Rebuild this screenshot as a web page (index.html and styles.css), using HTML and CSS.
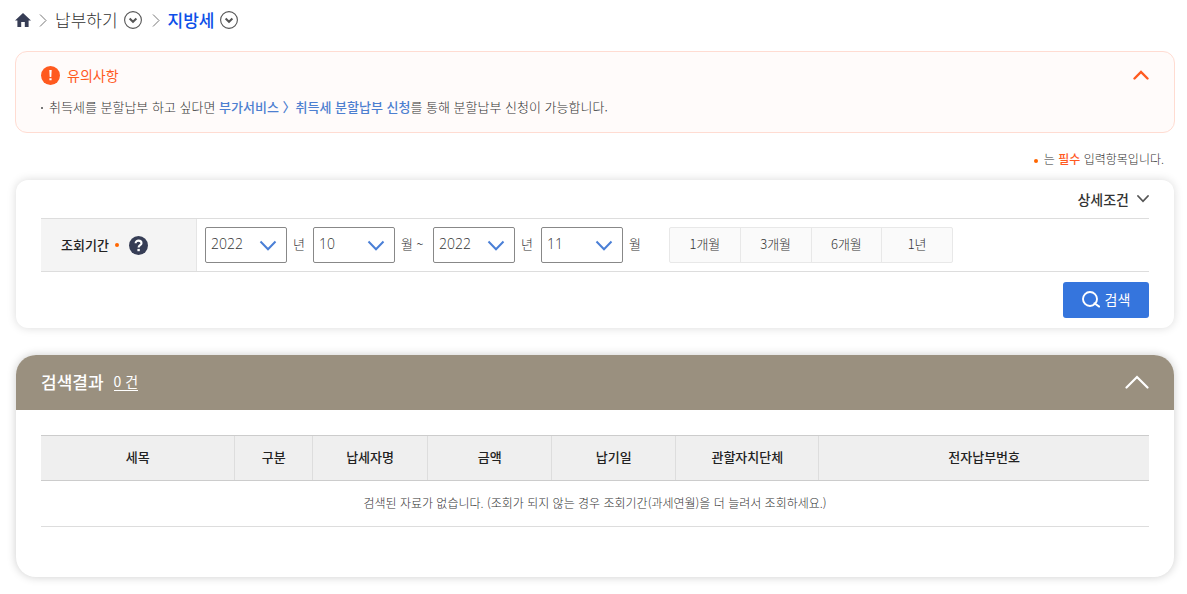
FILE: index.html
```html
<!DOCTYPE html>
<html lang="ko">

<head>
    <meta charset="UTF-8">
    <meta name="viewport" content="width=device-width, initial-scale=1.0">
    <title>지방세 납부하기</title>
    <link rel="stylesheet" href="styles.css">
</head>

<body>
    <nav class="location">
        <a href="#" class="home" aria-label="홈">
            <svg width="16" height="14" viewBox="0 0 16 14"><path d="M8 0 L16 7.5 H13.6 V14 H9.8 V9 H6.2 V14 H2.4 V7.5 H0 Z" fill="#363d55"/></svg>
        </a>
        <svg class="sep" width="8" height="13" viewBox="0 0 8 13"><path d="M1 .5 L7 6.5 L1 12.5" fill="none" stroke="#777"/></svg>
        <a href="#">납부하기</a>
        <button type="button" class="more" aria-label="납부하기 메뉴">
            <svg width="18" height="18" viewBox="0 0 18 18" fill="none"><circle cx="9" cy="9" r="8.4" stroke="#555" stroke-width="1.1"/><path d="M5.6 7.5 L9 10.8 L12.4 7.5" stroke="#555" stroke-width="2"/></svg>
        </button>
        <svg class="sep" width="8" height="13" viewBox="0 0 8 13"><path d="M1 .5 L7 6.5 L1 12.5" fill="none" stroke="#777"/></svg>
        <a href="#" class="on">지방세</a>
        <button type="button" class="more" aria-label="지방세 메뉴">
            <svg width="18" height="18" viewBox="0 0 18 18" fill="none"><circle cx="9" cy="9" r="8.4" stroke="#555" stroke-width="1.1"/><path d="M5.6 7.5 L9 10.8 L12.4 7.5" stroke="#555" stroke-width="2"/></svg>
        </button>
    </nav>

    <section class="notice">
        <div class="notice-head">
            <svg width="19" height="19" viewBox="0 0 19 19"><circle cx="9.5" cy="9.5" r="9.5" fill="#ff5a1f"/><path d="M8.3 4 H10.7 L10.3 11 H8.7 Z M8.4 12.3 H10.6 V14.3 H8.4 Z" fill="#fff"/></svg>
            <h2>유의사항</h2>
            <button type="button" class="toggle" aria-label="유의사항 접기">
                <svg width="16" height="10" viewBox="0 0 16 10"><path d="M1.5 8.5 L8 2 L14.5 8.5" fill="none" stroke="#ff5a1f" stroke-width="2.4" stroke-linecap="round"/></svg>
            </button>
        </div>
        <ul>
            <li>취득세를 분할납부 하고 싶다면 <a href="#">부가서비스 〉취득세 분할납부 신청</a>를 통해 분할납부 신청이 가능합니다.</li>
        </ul>
    </section>

    <p class="required"><i class="dot"></i>는 <em>필수</em> 입력항목입니다.</p>

    <form action="#" class="search">
        <button type="button" class="detail">상세조건
            <svg width="12" height="8" viewBox="0 0 12 8"><path d="M1 1 L6 6.3 L11 1" fill="none" stroke="#555" stroke-width="1.8" stroke-linecap="round"/></svg>
        </button>

        <div class="row">
            <div class="label">
                <span>조회기간</span><i class="dot"></i>
                <button type="button" class="help" aria-label="도움말">
                    <svg width="19" height="19" viewBox="0 0 19 19" fill="none"><circle cx="9.5" cy="9.5" r="9.5" fill="#363d55"/><path d="M6.6 7.3 C6.6 3.6 12.5 3.8 12.5 7.2 C12.5 9.3 9.6 9 9.6 11.4" stroke="#fff" stroke-width="2.1"/><path d="M8.4 12.9 H10.8 V15.2 H8.4 Z" fill="#fff"/></svg>
                </button>
            </div>
            <div class="period">
                <span class="select">
                    <select id="fromYear"><option>2022</option><option>2021</option></select>
                    <svg width="18" height="11" viewBox="0 0 18 11"><path d="M1.5 1.5 L9 9.2 L16.5 1.5" /></svg>
                </span>
                <label for="fromYear">년</label>
                <span class="select">
                    <select id="fromMonth"><option>10</option><option>11</option></select>
                    <svg width="18" height="11" viewBox="0 0 18 11"><path d="M1.5 1.5 L9 9.2 L16.5 1.5" /></svg>
                </span>
                <label for="fromMonth" class="wide">월 ~</label>
                <span class="select">
                    <select id="toYear"><option>2022</option><option>2021</option></select>
                    <svg width="18" height="11" viewBox="0 0 18 11"><path d="M1.5 1.5 L9 9.2 L16.5 1.5" /></svg>
                </span>
                <label for="toYear">년</label>
                <span class="select">
                    <select id="toMonth"><option>11</option><option>12</option></select>
                    <svg width="18" height="11" viewBox="0 0 18 11"><path d="M1.5 1.5 L9 9.2 L16.5 1.5" /></svg>
                </span>
                <label for="toMonth">월</label>
                <div class="quick">
                    <button type="button">1개월</button>
                    <button type="button">3개월</button>
                    <button type="button">6개월</button>
                    <button type="button">1년</button>
                </div>
            </div>
        </div>

        <button type="submit" class="submit">
            <svg width="18" height="17" viewBox="0 0 18 17" fill="none" stroke="#fff" stroke-width="1.9"><circle cx="8" cy="8" r="7"/><path d="M12.4 12.2 L17.2 15.6" stroke-linecap="round"/></svg>
            검색
        </button>
    </form>

    <section class="result">
        <div class="result-head">
            <h2>검색결과</h2>
            <span class="count">0 건</span>
            <button type="button" class="toggle" aria-label="검색결과 접기">
                <svg width="24" height="14" viewBox="0 0 24 14"><path d="M1.5 12.5 L12 2 L22.5 12.5" fill="none" stroke="#fff" stroke-width="2.2" stroke-linecap="round"/></svg>
            </button>
        </div>
        <div class="result-body">
            <table>
                <colgroup>
                    <col class="c1">
                    <col class="c2">
                    <col class="c3">
                    <col class="c4">
                    <col class="c4">
                    <col class="c5">
                    <col>
                </colgroup>
                <thead>
                    <tr>
                        <th>세목</th>
                        <th>구분</th>
                        <th>납세자명</th>
                        <th>금액</th>
                        <th>납기일</th>
                        <th>관할자치단체</th>
                        <th>전자납부번호</th>
                    </tr>
                </thead>
                <tbody>
                    <tr>
                        <td colspan="7">검색된 자료가 없습니다. (조회가 되지 않는 경우 조회기간(과세연월)을 더 늘려서 조회하세요.)</td>
                    </tr>
                </tbody>
            </table>
        </div>
    </section>
</body>

</html>
```
FILE: styles.css
```css
* {
    margin: 0;
    padding: 0;
    box-sizing: border-box;
}

body {
    padding: 8px 12px 16px 15px;
    background-color: #fff;
    color: #333;
    font-family: "Noto Sans CJK KR", "Noto Sans", sans-serif;
    font-size: 13px;
    font-weight: 300;
    line-height: 20px;
}

button,
select {
    font: inherit;
    color: inherit;
    border: 0;
    background: none;
    cursor: pointer;
}

a {
    color: inherit;
    text-decoration: none;
}

svg {
    display: block;
    flex: none;
}

/* location */
.location {
    display: flex;
    align-items: center;
    height: 24px;
    font-size: 17px;
}

.location .home {
    margin-right: 8px;
}

.location .sep {
    margin-right: 8px;
}

.location .more {
    margin: 0 10px 0 6px;
}

.location .on {
    color: #0c50e8;
    font-weight: 500;
}

/* notice */
.notice {
    margin-top: 19px;
    padding: 13px 25px 15px;
    border: 1px solid #ffdcd2;
    border-radius: 12px;
    background-color: #fffbfa;
}

.notice-head {
    display: flex;
    align-items: center;
    gap: 7px;
    height: 20px;
}

.notice-head h2 {
    color: #ff5a1f;
    font-size: 14px;
    font-weight: 400;
}

.toggle {
    margin-left: auto;
}

.notice ul {
    margin-top: 12px;
    list-style: none;
}

.notice li::before {
    content: "";
    display: inline-block;
    width: 2px;
    height: 2px;
    margin-right: 6px;
    background-color: #777;
    vertical-align: middle;
}

.notice li a {
    color: #4d7fd0;
    font-weight: 500;
}

.required {
    margin-top: 16px;
    padding-right: 11px;
    font-size: 12px;
    text-align: right;
}

.required em {
    color: #ff5a1f;
    font-style: normal;
    font-weight: 500;
}

.dot {
    display: inline-block;
    width: 4px;
    height: 4px;
    border-radius: 50%;
    background-color: #f60;
    vertical-align: middle;
}

.required .dot {
    margin-right: 6px;
}

/* search */
.search {
    display: flex;
    flex-direction: column;
    margin: 11px 1px 0;
    padding: 0 25px 10px;
    border-radius: 12px;
    background-color: #fff;
    box-shadow: 0 0 10px rgba(0, 0, 0, 0.15);
}

.detail {
    display: flex;
    align-items: center;
    gap: 8px;
    align-self: flex-end;
    height: 38px;
    color: #333;
    font-size: 14px;
    font-weight: 500;
}

.row {
    display: flex;
    min-height: 54px;
    border-top: 1px solid #ddd;
    border-bottom: 1px solid #ddd;
}

.label {
    display: flex;
    align-items: center;
    width: 156px;
    padding-left: 20px;
    border-right: 1px solid #e5e5e5;
    background-color: #f4f4f4;
    color: #222;
    font-weight: 500;
}

.label .dot {
    margin: 0 10px 0 6px;
}

.period {
    display: flex;
    flex-wrap: wrap;
    align-items: center;
    padding: 8px;
}

.period label {
    width: 26px;
    padding: 0 0 2px 6px;
}

.period .wide {
    width: 38px;
}

.select {
    display: grid;
    align-items: center;
    width: 82px;
}

.select select,
.select svg {
    grid-area: 1 / 1;
}

.select select {
    width: 100%;
    height: 36px;
    padding: 0 5px 2px;
    border: 1px solid #888;
    border-radius: 2px;
    appearance: none;
    font-family: "Open Sans", "Noto Sans", sans-serif;
    font-size: 14px;
}

.select svg {
    justify-self: end;
    margin-right: 10px;
    fill: none;
    stroke: #4a7fd6;
    stroke-width: 2;
    pointer-events: none;
}

.quick {
    display: flex;
    width: 284px;
    margin-left: 20px;
    border: 1px solid #e8e8e8;
    border-radius: 2px;
    background-color: #fafafa;
}

.quick button {
    flex: 1;
    height: 34px;
    padding-bottom: 2px;
}

.quick button + button {
    border-left: 1px solid #e8e8e8;
}

.submit {
    display: flex;
    align-items: center;
    justify-content: center;
    gap: 5px;
    align-self: flex-end;
    width: 86px;
    height: 36px;
    margin-top: 10px;
    padding-bottom: 2px;
    border-radius: 3px;
    background-color: #3575dd;
    color: #fff;
    font-size: 14px;
    font-weight: 400;
}

/* result */
.result {
    margin: 27px 1px 0;
    border-radius: 20px;
    background-color: #fff;
    box-shadow: 0 0 10px rgba(0, 0, 0, 0.2);
}

.result-head {
    display: flex;
    align-items: center;
    height: 55px;
    padding: 0 25px 2px;
    border-radius: 20px 20px 0 0;
    background-color: #9a907f;
    color: #fff;
}

.result-head h2 {
    margin-right: 10px;
    font-size: 17px;
    font-weight: 500;
}

.count {
    border-bottom: 1px solid #fff;
    font-size: 14px;
    font-weight: 400;
    line-height: 18px;
}

.result-body {
    padding: 25px 25px 50px;
}

table {
    width: 100%;
    border-collapse: collapse;
    table-layout: fixed;
    text-align: center;
}

.c1 {
    width: 17.5%;
}

.c2 {
    width: 7%;
}

.c3 {
    width: 10.4%;
}

.c4 {
    width: 11.2%;
}

.c5 {
    width: 12.9%;
}

th {
    height: 45px;
    padding-bottom: 2px;
    border-top: 1px solid #ccc;
    border-bottom: 1px solid #ccc;
    background-color: #efefef;
    color: #222;
    font-weight: 500;
}

th + th {
    border-left: 1px solid #ddd;
}

td {
    height: 46px;
    padding-bottom: 2px;
    border-bottom: 1px solid #ddd;
    font-size: 12px;
}
```
